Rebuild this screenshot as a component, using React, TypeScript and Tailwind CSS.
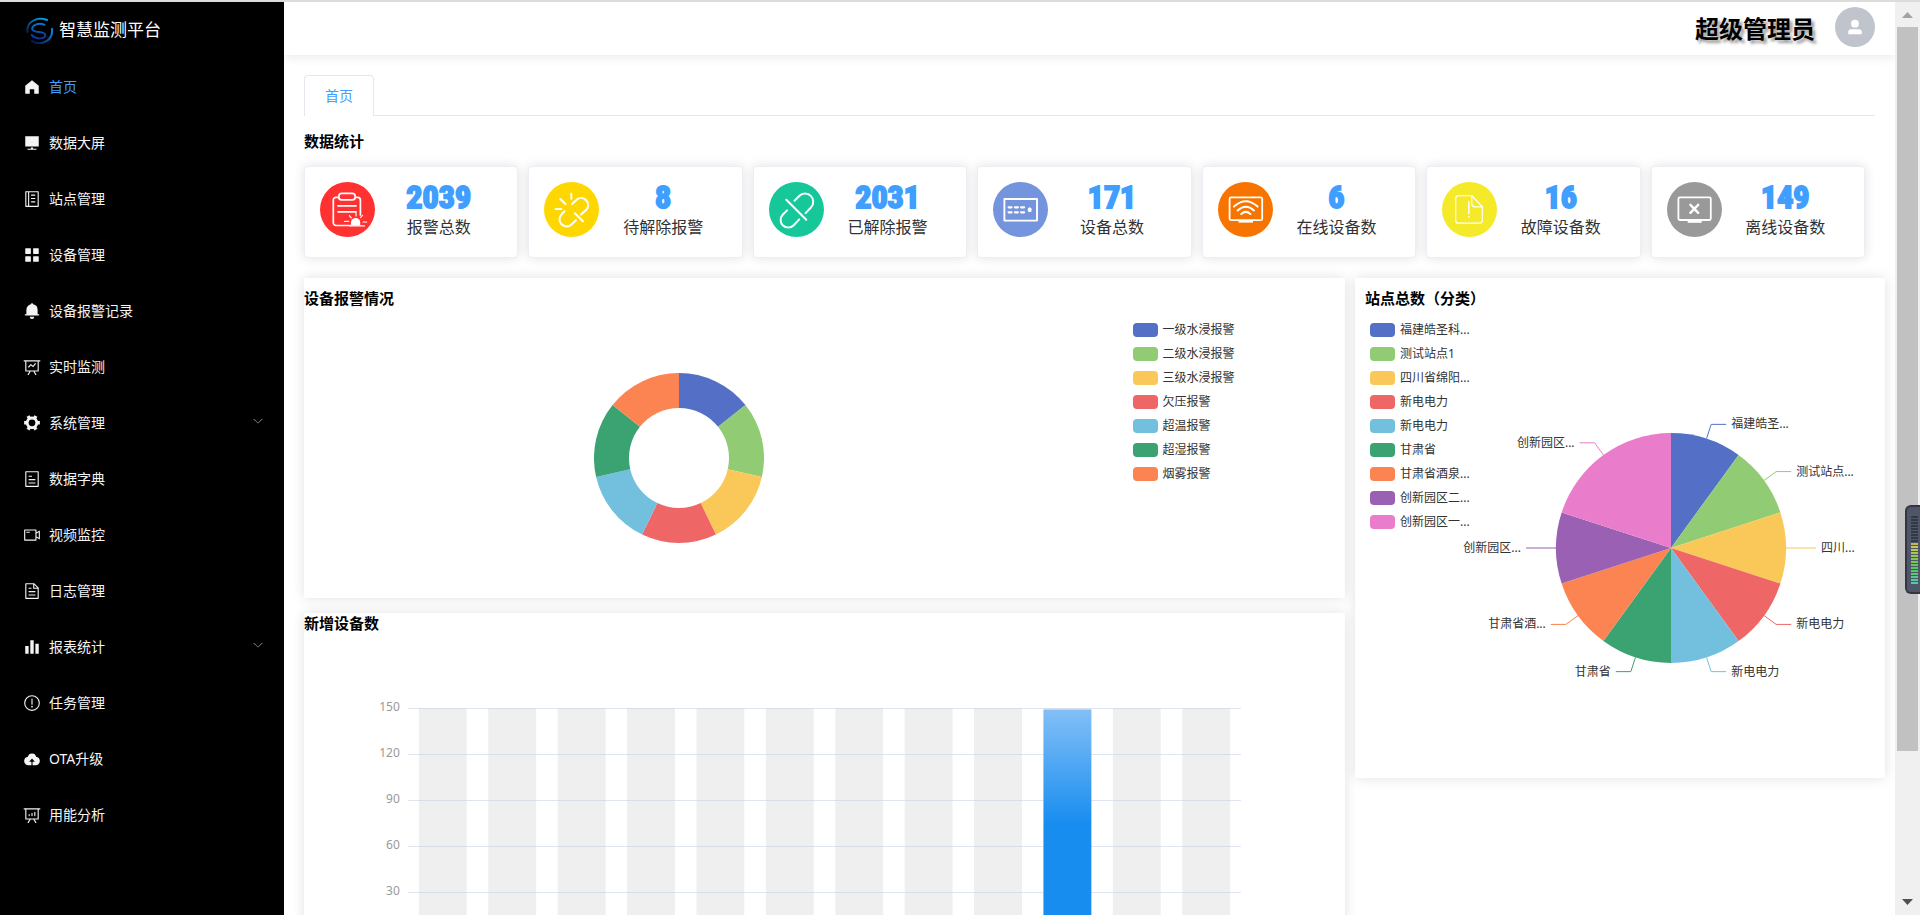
import type { ReactNode } from 'react'

const PALETTE = ['#5470c6', '#91cc75', '#fac858', '#ee6666', '#73c0de', '#3ba272', '#fc8452', '#9a60b4', '#ea7ccc']

const icons = {
  home: 'M512 128 128 447.936V896h255.936V640H640v256h255.936V447.936z',
  platform: 'M448 832v-64h128v64h192v64H256v-64h192zM128 704V128h768v576H128z',
  memo: 'M480 320h192c21.33 0 32-10.67 32-32s-10.67-32-32-32H480c-21.33 0-32 10.67-32 32s10.67 32 32 32zM887.01 72.99C881.01 67 873.34 64 864 64H160c-9.35 0-17.02 3-23.01 8.99C131 78.99 128 86.66 128 96v832c0 9.35 2.99 17.02 8.99 23.01S150.66 960 160 960h704c9.35 0 17.02-2.99 23.01-8.99S896 937.34 896 928V96c0-9.35-3-17.02-8.99-23.01zM192 896V128h96v768h-96zm640 0H352V128h480v768zM480 512h192c21.33 0 32-10.67 32-32s-10.67-32-32-32H480c-21.33 0-32 10.67-32 32s10.67 32 32 32zm0 192h192c21.33 0 32-10.67 32-32s-10.67-32-32-32H480c-21.33 0-32 10.67-32 32s10.67 32 32 32z',
  menu: 'M160 448a32 32 0 0 1-32-32V160a32 32 0 0 1 32-32h256a32 32 0 0 1 32 32v256a32 32 0 0 1-32 32H160zm448 0a32 32 0 0 1-32-32V160a32 32 0 0 1 32-32h256a32 32 0 0 1 32 32v256a32 32 0 0 1-32 32H608zM160 896a32 32 0 0 1-32-32V608a32 32 0 0 1 32-32h256a32 32 0 0 1 32 32v256a32 32 0 0 1-32 32H160zm448 0a32 32 0 0 1-32-32V608a32 32 0 0 1 32-32h256a32 32 0 0 1 32 32v256a32 32 0 0 1-32 32H608z',
  bell: 'M640 832a128 128 0 0 1-256 0h256zm192-64H134.4a38.4 38.4 0 0 1 0-76.8H192V448c0-154.88 110.08-284.16 256.32-313.6a64 64 0 1 1 127.36 0A320.128 320.128 0 0 1 832 448v243.2h57.6a38.4 38.4 0 0 1 0 76.8H832z',
  dataLine: 'M359.168 768H160a32 32 0 0 1-32-32V192H64a32 32 0 0 1 0-64h896a32 32 0 1 1 0 64h-64v544a32 32 0 0 1-32 32H665.216l110.848 192h-73.856L591.36 768H433.024L322.176 960H248.32l110.848-192zM832 192H192v512h640V192zM342.656 534.656a32 32 0 1 1-45.312-45.312L444.992 341.76l125.44 94.08L679.04 300.032a32 32 0 1 1 49.92 39.936L581.632 524.224 451.008 426.24 342.656 534.592z',
  tools: 'M764.416 254.72a351.68 351.68 0 0 1 86.336 149.184H960v192.064H850.752a351.68 351.68 0 0 1-86.336 149.312l54.72 94.72-166.272 96-54.592-94.72a352.64 352.64 0 0 1-172.48 0L371.136 936l-166.272-96 54.72-94.72a351.68 351.68 0 0 1-86.336-149.312H64v-192h109.248a351.68 351.68 0 0 1 86.336-149.312L204.8 160l166.208-96h.192l54.656 94.592a352.64 352.64 0 0 1 172.48 0L652.8 64h.128L819.2 160l-54.72 94.72zM704 499.968a192 192 0 1 0-384 0 192 192 0 0 0 384 0z',
  tickets: 'M192 128v768h640V128H192zm-32-64h704a32 32 0 0 1 32 32v832a32 32 0 0 1-32 32H160a32 32 0 0 1-32-32V96a32 32 0 0 1 32-32zm160 448h384v64H320v-64zm0-192h192v64H320v-64zm0 384h384v64H320v-64z',
  video: 'M704 768V256H128v512h576zm64-416 192-96v512l-192-96v128a32 32 0 0 1-32 32H96a32 32 0 0 1-32-32V224a32 32 0 0 1 32-32h640a32 32 0 0 1 32 32v128zm0 71.552v176.896l128 64V359.552l-128 64zM192 320h192v64H192v-64z',
  document: 'M832 384H576V128H192v768h640V384zm-26.496-64L640 154.496V320h165.504zM160 64h480l256 256v608a32 32 0 0 1-32 32H160a32 32 0 0 1-32-32V96a32 32 0 0 1 32-32zm160 448h384v64H320v-64zm0-192h160v64H320v-64zm0 384h384v64H320v-64z',
  histogram: 'M416 896V128h192v768H416zm-288 0V448h192v448H128zm576 0V320h192v576H704z',
  warning: 'M512 64a448 448 0 1 1 0 896 448 448 0 0 1 0-896zm0 832a384 384 0 0 0 0-768 384 384 0 0 0 0 768zm48-176a48 48 0 1 1-96 0 48 48 0 0 1 96 0zm-48-464a32 32 0 0 1 32 32v288a32 32 0 0 1-64 0V288a32 32 0 0 1 32-32z',
  upload: 'M544 864V672h128L512 480 352 672h128v192H320v-1.6c-5.376.32-10.496 1.6-16 1.6A240 240 0 0 1 64 624c0-123.136 93.12-223.488 212.608-237.248A239.808 239.808 0 0 1 512 192a239.872 239.872 0 0 1 235.456 194.752c119.488 13.76 212.48 114.112 212.48 237.248a240 240 0 0 1-240 240c-5.376 0-10.56-1.28-16-1.6v1.6H544z',
  dataAnalysis: 'M665.216 768l110.848 192h-73.856L591.36 768H433.024L322.176 960H248.32l110.848-192H160a32 32 0 0 1-32-32V192H64a32 32 0 0 1 0-64h896a32 32 0 1 1 0 64h-64v544a32 32 0 0 1-32 32H665.216zM832 192H192v512h640V192zM352 448a32 32 0 0 1 32 32v64a32 32 0 0 1-64 0v-64a32 32 0 0 1 32-32zm160-64a32 32 0 0 1 32 32v128a32 32 0 0 1-64 0V416a32 32 0 0 1 32-32zm160-64a32 32 0 0 1 32 32v192a32 32 0 0 1-64 0V352a32 32 0 0 1 32-32z',
  user: 'M288 320a224 224 0 1 0 448 0 224 224 0 1 0-448 0zm544 608H160a32 32 0 0 1-32-32v-96a160 160 0 0 1 160-160h448a160 160 0 0 1 160 160v96a32 32 0 0 1-32 32z',
  arrowDown: 'M831.872 340.864 512 652.672 192.128 340.864a30.592 30.592 0 0 0-42.752 0 29.12 29.12 0 0 0 0 41.6L489.664 714.24a32 32 0 0 0 44.672 0l340.288-331.712a29.12 29.12 0 0 0 0-41.728 30.592 30.592 0 0 0-42.752.064z',
}

type IconName = keyof typeof icons

function Icon({ name, className }: { name: IconName; className: string }) {
  return (
    <svg viewBox="0 0 1024 1024" fill="currentColor" className={className} aria-hidden="true">
      <path d={icons[name]} />
    </svg>
  )
}

interface MenuItem {
  label: string
  icon: IconName
  active?: boolean
  children?: boolean
}

const menu: MenuItem[] = [
  { label: '首页', icon: 'home', active: true },
  { label: '数据大屏', icon: 'platform' },
  { label: '站点管理', icon: 'memo' },
  { label: '设备管理', icon: 'menu' },
  { label: '设备报警记录', icon: 'bell' },
  { label: '实时监测', icon: 'dataLine' },
  { label: '系统管理', icon: 'tools', children: true },
  { label: '数据字典', icon: 'tickets' },
  { label: '视频监控', icon: 'video' },
  { label: '日志管理', icon: 'document' },
  { label: '报表统计', icon: 'histogram', children: true },
  { label: '任务管理', icon: 'warning' },
  { label: 'OTA升级', icon: 'upload' },
  { label: '用能分析', icon: 'dataAnalysis' },
]

interface Stat {
  label: string
  value: number
  color: string
  drawing: ReactNode
}

const stats: Stat[] = [
  {
    label: '报警总数',
    value: 2039,
    color: '#ff3131',
    drawing: (
      <g strokeWidth="1.7">
        <path d="M18.5 15.3H16a2.7 2.7 0 0 0-2.7 2.7v22.8a2.7 2.7 0 0 0 2.7 2.7h15M35.5 15.3h2.2a2.7 2.7 0 0 1 2.7 2.7v15" />
        <rect x="18.8" y="11.3" width="16.4" height="6.6" rx="3" />
        <path d="M18 23.8h18M18 29.8h18" />
        <path d="M29.3 33.6l2 2.2M36 30.8V34M42.5 33.4l-2 2.2M24.6 39.4h4.2M43 40h3.8" strokeWidth="1.1" />
        <path d="M31 43.5v-3a4.6 4.6 0 0 1 9.2 0v3z" fill="#fff" stroke="none" />
        <path d="M30 43.9h14.5" strokeWidth="1.2" />
      </g>
    ),
  },
  {
    label: '待解除报警',
    value: 8,
    color: '#ffd700',
    drawing: (
      <g strokeWidth="2">
        <path d="M28 22l5-4.6a7 7 0 0 1 9.6 10L37 32.6" />
        <path d="M20.5 29.3l-2.8 3a7 7 0 0 0 9.8 10.2L32 38.2" />
        <path d="M30.8 31.3l8.2 8M27.3 11.8v5M16.3 17l5.2 5M11.5 27h5.8" />
      </g>
    ),
  },
  {
    label: '已解除报警',
    value: 2031,
    color: '#16c79a',
    drawing: (
      <g strokeWidth="2">
        <path d="M25.5 18.7l4.7-4.7a8 8 0 0 1 11.7 11.5l-5.3 5.6" />
        <path d="M18 28.4l-4.3 4.4a7 7 0 0 0 11 10.4l5.5-5.8" />
        <path d="M17.3 17.7l20 20" />
      </g>
    ),
  },
  {
    label: '设备总数',
    value: 171,
    color: '#7494dd',
    drawing: (
      <g strokeWidth="1.9">
        <rect x="11.4" y="17" width="32.6" height="21.6" />
        <path d="M15.6 25.3h3M21.9 25.3h3M28.1 25.3h3M15.6 30.3h3M21.9 30.3h3M28.1 30.3h3" strokeWidth="2.2" />
        <ellipse cx="36.7" cy="27.8" rx="2" ry="2.5" fill="#fff" stroke="none" />
      </g>
    ),
  },
  {
    label: '在线设备数',
    value: 6,
    color: '#f77400',
    drawing: (
      <g strokeWidth="1.8">
        <rect x="11.6" y="15.4" width="32.6" height="22.8" rx="1.5" />
        <path d="M20.5 38h14.5v2.6H20.5z" fill="#fff" stroke="none" />
        <path d="M16 24.6q11.8-10.6 23.6 0M19.6 28.4q8.2-7.4 16.4 0M23.2 32q4.6-4.2 9.2 0" strokeWidth="2" />
      </g>
    ),
  },
  {
    label: '故障设备数',
    value: 16,
    color: '#f5ea29',
    drawing: (
      <g strokeWidth="1.2">
        <path d="M29.8 13.6H16.5a2.8 2.8 0 0 0-2.8 2.8v22a2.8 2.8 0 0 0 2.8 2.8h21a2.8 2.8 0 0 0 2.8-2.8V25z" />
        <path d="M29.8 13.6v8.2a3 3 0 0 0 3 3h7.5" />
        <path d="M26.8 19.8v11.6M26.8 34.4v.6" strokeWidth="1.5" />
      </g>
    ),
  },
  {
    label: '离线设备数',
    value: 149,
    color: '#999999',
    drawing: (
      <g strokeWidth="1.8">
        <rect x="11.4" y="15.4" width="32.4" height="22.6" rx="1.5" />
        <path d="M20.7 38h14v2.8h-14z" fill="#fff" stroke="none" />
        <path d="M23.4 22.8l7.8 8M31.2 22.8l-7.8 8" strokeWidth="2.4" />
      </g>
    ),
  },
]

const alarmTypes = ['一级水浸报警', '二级水浸报警', '三级水浸报警', '欠压报警', '超温报警', '超湿报警', '烟雾报警']

const sites = [
  { name: '福建皓圣科...', label: '福建皓圣...', share: 1 },
  { name: '测试站点1', label: '测试站点...', share: 1 },
  { name: '四川省绵阳...', label: '四川...', share: 1 },
  { name: '新电电力', label: '新电电力', share: 1 },
  { name: '新电电力', label: '新电电力', share: 1 },
  { name: '甘肃省', label: '甘肃省', share: 1 },
  { name: '甘肃省酒泉...', label: '甘肃省酒...', share: 1 },
  { name: '创新园区二...', label: '创新园区...', share: 1 },
  { name: '创新园区一...', label: '创新园区...', share: 2 },
]

const newDevices = [0, 0, 0, 0, 0, 0, 0, 0, 0, 149, 0, 0]

// Point on a circle, turn = 0 at the top, clockwise
function polar(cx: number, cy: number, r: number, turn: number) {
  const a = turn * Math.PI * 2
  return [cx + r * Math.sin(a), cy - r * Math.cos(a)]
}

function Logo() {
  return (
    <svg viewBox="0 0 27 27" className="size-[27px]" fill="none" strokeLinecap="round" aria-hidden="true">
      <defs>
        <linearGradient id="logoTop" x1="1" y1="0" x2="0" y2="1">
          <stop offset="0" stopColor="#00a2f2" />
          <stop offset="1" stopColor="#04225c" />
        </linearGradient>
        <linearGradient id="logoBottom" gradientUnits="userSpaceOnUse" x1="26" y1="10" x2="8" y2="26">
          <stop offset="0" stopColor="#0a8ae0" />
          <stop offset="1" stopColor="#081250" />
        </linearGradient>
        <linearGradient id="logoInner" gradientUnits="userSpaceOnUse" x1="14" y1="6" x2="14" y2="22">
          <stop offset="0" stopColor="#0678c4" />
          <stop offset="1" stopColor="#0b2f92" />
        </linearGradient>
      </defs>
      <path d="M1.500 15C0 5 11-1 21 3" stroke="url(#logoTop)" strokeWidth="2" />
      <path d="M26 12c1.400 11-11 18-20 12" stroke="url(#logoBottom)" strokeWidth="2.200" />
      <path d="M18.500 7.800C13 5 6.200 8 6.200 12c0 4.600 13 1.500 13 6 0 4-9 5-13.500 0" stroke="url(#logoInner)" strokeWidth="2" />
    </svg>
  )
}

function Sidebar() {
  return (
    <aside className="w-[284px] shrink-0 bg-black text-[#f4f4f5]">
      <div className="flex h-14 items-center gap-1.5 pl-[26px] text-[17px] text-white">
        <Logo />
        <span>智慧监测平台</span>
      </div>
      <nav className="pt-px">
        {menu.map((item) => {
          const content = (
            <>
              <Icon name={item.icon} className="mx-[3px] size-[18px]" />
              <span className={item.active ? 'pl-[5px] text-[#409eff]' : 'pl-[5px]'}>{item.label}</span>
            </>
          )
          return item.children ? (
            <button key={item.label} type="button" className="flex h-14 w-full items-center px-5 text-left text-sm">
              {content}
              <Icon name="arrowDown" className="mb-1 ml-auto size-3 text-[#909399]" />
            </button>
          ) : (
            <a key={item.label} href="#" className="flex h-14 items-center px-5 text-sm">
              {content}
            </a>
          )
        })}
      </nav>
    </aside>
  )
}

function StatCard({ stat }: { stat: Stat }) {
  return (
    <div className="flex items-start rounded border border-[#ebeef5] bg-white px-[15px] py-[15px] shadow-[0_0_12px_rgba(0,0,0,0.12)]">
      <svg viewBox="0 0 55 55" className="size-[55px] shrink-0" fill="none" stroke="#fff" strokeLinecap="round" strokeLinejoin="round" aria-hidden="true">
        <circle cx="27.5" cy="27.5" r="27.5" fill={stat.color} stroke="none" />
        {stat.drawing}
      </svg>
      <div className="flex-1 text-center">
        <div className="font-['Liberation_Sans_Narrow','Roboto_Condensed','Roboto',sans-serif] text-[32px] leading-[30px] font-bold text-[#409eff] [-webkit-text-stroke:2px_#409eff]">
          {stat.value}
        </div>
        <div className="text-base leading-[30px] text-[#303133]">{stat.label}</div>
      </div>
    </div>
  )
}

function Legend({ names }: { names: string[] }) {
  return (
    <ul className="text-xs text-[#333]">
      {names.map((name, i) => (
        <li key={i} className="flex h-6 items-center gap-[5px] whitespace-nowrap">
          <span className="h-3.5 w-[25px] shrink-0 rounded" style={{ backgroundColor: PALETTE[i] }} />
          <span>{name}</span>
        </li>
      ))}
    </ul>
  )
}

function AlarmDonut() {
  const n = alarmTypes.length
  return (
    <svg viewBox="0 0 170 170" className="size-[170px]" role="img" aria-label="设备报警情况">
      {alarmTypes.map((name, i) => {
        const [x0, y0] = polar(85, 85, 85, i / n)
        const [x1, y1] = polar(85, 85, 85, (i + 1) / n)
        const [x2, y2] = polar(85, 85, 50, (i + 1) / n)
        const [x3, y3] = polar(85, 85, 50, i / n)
        return (
          <path
            key={name}
            d={`M${x0} ${y0}A85 85 0 0 1 ${x1} ${y1}L${x2} ${y2}A50 50 0 0 0 ${x3} ${y3}Z`}
            fill={PALETTE[i]}
          />
        )
      })}
    </svg>
  )
}

function SitePie() {
  const total = sites.reduce((sum, s) => sum + s.share, 0)
  const cx = 211
  const cy = 148
  let acc = 0
  return (
    <svg viewBox="0 0 420 300" className="h-[300px] w-[420px] overflow-visible text-xs" role="img" aria-label="站点总数（分类）">
      {sites.map((site, i) => {
        const from = acc / total
        acc += site.share
        const to = acc / total
        const mid = (from + to) / 2
        const side = mid < 0.5 ? 1 : -1
        const [x0, y0] = polar(cx, cy, 115, from)
        const [x1, y1] = polar(cx, cy, 115, to)
        const [ex, ey] = polar(cx, cy, 115, mid)
        const [mx, my] = polar(cx, cy, 130, mid)
        return (
          <g key={i}>
            <path d={`M${cx} ${cy}L${x0} ${y0}A115 115 0 0 1 ${x1} ${y1}Z`} fill={PALETTE[i]} />
            <path d={`M${ex} ${ey}L${mx} ${my}H${mx + side * 15}`} fill="none" stroke={PALETTE[i]} />
            <text x={mx + side * 20} y={my + 4} textAnchor={side > 0 ? 'start' : 'end'} fill="#333">
              {site.label}
            </text>
          </g>
        )
      })}
    </svg>
  )
}

function DeviceBars() {
  const top = 73
  const height = 230
  const step = 80 / newDevices.length
  return (
    <svg className="h-[340px] w-full text-xs" role="img" aria-label="新增设备数">
      <defs>
        <linearGradient id="barFill" x1="0" y1="0" x2="0" y2="1">
          <stop offset="0" stopColor="#83bff6" />
          <stop offset="0.5" stopColor="#188df0" />
          <stop offset="1" stopColor="#188df0" />
        </linearGradient>
      </defs>
      {newDevices.map((_, i) => (
        <rect key={i} x={`${10 + step * (i + 0.155)}%`} y={top} width={`${step * 0.69}%`} height={height} fill="#efefef" />
      ))}
      {[150, 120, 90, 60, 30].map((value, i) => (
        <g key={value}>
          <line x1="10%" x2="90%" y1={top + 0.5 + i * 46} y2={top + 0.5 + i * 46} stroke="#c3cfe6" strokeOpacity="0.55" />
          <text x="9.2%" y={top + 3 + i * 46} textAnchor="end" fill="#999">
            {value}
          </text>
        </g>
      ))}
      {newDevices.map((value, i) => {
        const h = (value / 150) * height
        return (
          <rect key={i} x={`${10 + step * (i + 0.155)}%`} y={top + height - h} width={`${step * 0.69}%`} height={h} fill="url(#barFill)" />
        )
      })}
    </svg>
  )
}

function Scrollbar() {
  return (
    <div className="relative flex w-[25px] shrink-0 flex-col items-center bg-[#f0f0f0]" aria-hidden="true">
      <svg viewBox="0 0 11 6" className="mt-[10px] mb-[9px] h-1.5 w-[11px] fill-[#a3a3a3]">
        <path d="M0 6 5.500 0 11 6z" />
      </svg>
      <div className="w-[21px] flex-[724] bg-[#c1c1c1]" />
      <div className="flex-[148]" />
      <svg viewBox="0 0 11 6" className="mb-[10px] h-1.5 w-[11px] fill-[#505050]">
        <path d="M0 0h11L5.500 6z" />
      </svg>
      {/* Level meter docked over the scrollbar */}
      <div className="absolute top-[503px] right-0 flex h-[89px] w-[15px] flex-col justify-center gap-px rounded-l-md border-y-2 border-l-2 border-[#34363f] bg-[#50566a] pl-1">
        {Array.from({ length: 23 }, (_, i) => (
          <span
            key={i}
            className="h-[2px] w-[7px]"
            style={{ backgroundColor: i < 9 ? '#343844' : `hsl(${50 + (i - 9) * 9} 50% 56%)` }}
          />
        ))}
      </div>
    </div>
  )
}

function App() {
  return (
    <div className="flex h-screen flex-col overflow-hidden border-t-2 border-[#dcdcdc] bg-white font-['Noto_Sans','Noto_Sans_CJK_SC',sans-serif]">
      <div className="flex min-h-0 flex-1">
        <Sidebar />

        <div className="flex min-w-0 flex-1 flex-col overflow-hidden">
          {/* Header */}
          <header className="z-10 flex h-[53px] shrink-0 items-center justify-end gap-5 bg-white pr-5 shadow-[0_0_12px_rgba(0,0,0,0.12)]">
            <span className="text-2xl font-bold text-black [text-shadow:3px_3px_3px_rgba(0,0,0,0.4)]">超级管理员</span>
            <button type="button" aria-label="用户" className="mb-1 flex size-10 items-center justify-center rounded-full bg-[#c0c4cc] text-white">
              <Icon name="user" className="size-[18px]" />
            </button>
          </header>

          <main className="min-h-0 flex-1 pt-5 pl-5">
            {/* Tabs */}
            <div className="mr-5 flex h-[41px] border-b border-[#e4e7ed]" role="tablist">
              <button
                type="button"
                role="tab"
                aria-selected="true"
                className="h-[41px] rounded-t border border-b-0 border-[#e4e7ed] bg-white px-5 text-sm text-[#409eff]"
              >
                首页
              </button>
            </div>

            <h2 className="mt-[14px] text-[15px] leading-[22px] font-bold">数据统计</h2>

            <section className="mt-[14px] mr-[30px] grid grid-cols-7 gap-[10px]">
              {stats.map((stat) => (
                <StatCard key={stat.label} stat={stat} />
              ))}
            </section>

            {/* Charts */}
            <div className="mt-5 mr-[10px] grid grid-cols-[minmax(0,1fr)_530px] items-start gap-[10px]">
              <div className="space-y-[15px]">
                <section className="h-[320px] bg-white pt-[10px] shadow-[0_0_12px_rgba(0,0,0,0.12)]">
                  <h2 className="text-[15px] leading-5 font-bold">设备报警情况</h2>
                  <div className="flex pt-[10px]">
                    <div className="flex w-[72%] justify-center pt-[55px]">
                      <AlarmDonut />
                    </div>
                    <div className="pl-[79px]">
                      <Legend names={alarmTypes} />
                    </div>
                  </div>
                </section>
                <section className="bg-white shadow-[0_0_12px_rgba(0,0,0,0.12)]">
                  <h2 className="mb-[2px] text-[15px] leading-5 font-bold">新增设备数</h2>
                  <DeviceBars />
                </section>
              </div>

              <section className="h-[500px] bg-white pt-[10px] shadow-[0_0_12px_rgba(0,0,0,0.12)]">
                <h2 className="pl-[10px] text-[15px] leading-5 font-bold">站点总数（分类）</h2>
                <div className="flex pt-[10px] pl-[15px]">
                  <div className="w-[90px] shrink-0">
                    <Legend names={sites.map((s) => s.name)} />
                  </div>
                  <div className="pt-[82px]">
                    <SitePie />
                  </div>
                </div>
              </section>
            </div>
          </main>
        </div>

        <Scrollbar />
      </div>
    </div>
  )
}

export default App
